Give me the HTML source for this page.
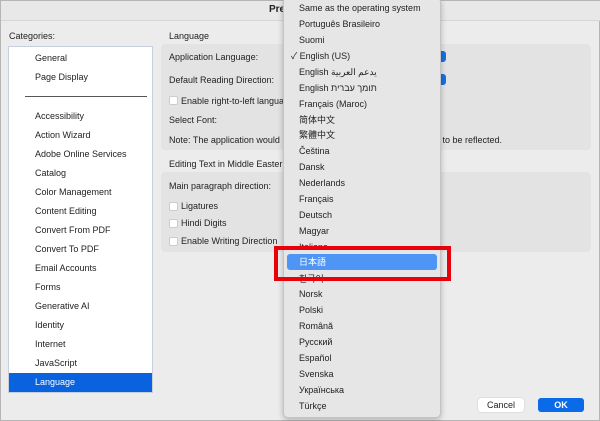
<!DOCTYPE html><html><head><style>
*{margin:0;padding:0;box-sizing:border-box}
body{width:600px;height:421px;overflow:hidden;background:#ececec;font-family:"Liberation Sans","Noto Sans CJK JP",sans-serif;font-size:9px;line-height:11px;color:#222;position:relative;border:1px solid #b5b5b5}
.a{position:absolute;white-space:nowrap}
.cb{position:absolute;width:9px;height:9px;background:#fff;border:1px solid #ccc;border-radius:2px}
.li{position:absolute;left:34px;font-size:9px}
.mi{position:absolute;left:298px;font-size:9px;line-height:11px;height:11px;overflow:visible;color:#222}
</style></head><body>
<div class="a" style="left:0;top:0;width:600px;height:20px;background:#e8e8e8;border-bottom:1px solid #d6d6d6"></div>
<div class="a" style="left:268px;top:3px;font-weight:bold;font-size:10px">Preferences</div>
<div class="a" style="left:8px;top:30px">Categories:</div>
<div class="a" style="left:7px;top:45px;width:145px;height:347px;background:#fff;border:1px solid #c8cfdc"></div>
<div class="li" style="top:52px">General</div>
<div class="li" style="top:71px">Page Display</div>
<div class="a" style="left:24px;top:95px;width:122px;height:1px;background:#555"></div>
<div class="li" style="top:110px">Accessibility</div>
<div class="li" style="top:129px">Action Wizard</div>
<div class="li" style="top:148px">Adobe Online Services</div>
<div class="li" style="top:167px">Catalog</div>
<div class="li" style="top:186px">Color Management</div>
<div class="li" style="top:205px">Content Editing</div>
<div class="li" style="top:224px">Convert From PDF</div>
<div class="li" style="top:243px">Convert To PDF</div>
<div class="li" style="top:262px">Email Accounts</div>
<div class="li" style="top:281px">Forms</div>
<div class="li" style="top:300px">Generative AI</div>
<div class="li" style="top:319px">Identity</div>
<div class="li" style="top:338px">Internet</div>
<div class="li" style="top:357px">JavaScript</div>
<div class="a" style="left:8px;top:372px;width:143px;height:19px;background:#0a63de"></div>
<div class="li" style="top:376px;color:#fff">Language</div>

<div class="a" style="left:168px;top:30px">Language</div>
<div class="a" style="left:160px;top:43px;width:430px;height:106px;background:#e3e3e3;border-radius:4px"></div>
<div class="a" style="left:168px;top:51px">Application Language:</div>
<div class="a" style="left:168px;top:74px">Default Reading Direction:</div>
<div class="cb" style="left:168px;top:95px"></div>
<div class="a" style="left:180px;top:95px">Enable right-to-left language options</div>
<div class="a" style="left:168px;top:114px">Select Font:</div>
<div class="a" style="left:168px;top:134px">Note: The application would need to restart for the language change to be reflected.</div>
<div class="a" style="left:437px;top:50px;width:8px;height:11px;background:#1a6fe0;border-radius:3px"></div>
<div class="a" style="left:437px;top:73px;width:8px;height:11px;background:#1a6fe0;border-radius:3px"></div>
<div class="a" style="left:168px;top:158px">Editing Text in Middle Eastern Languages</div>
<div class="a" style="left:160px;top:171px;width:430px;height:80px;background:#e3e3e3;border-radius:4px"></div>
<div class="a" style="left:168px;top:180px">Main paragraph direction:</div>
<div class="cb" style="left:168px;top:201px"></div><div class="a" style="left:180px;top:200px">Ligatures</div>
<div class="cb" style="left:168px;top:218px"></div><div class="a" style="left:180px;top:217px">Hindi Digits</div>
<div class="cb" style="left:168px;top:236px"></div><div class="a" style="left:180px;top:235px">Enable Writing Direction</div>

<div class="a" style="left:477px;top:397px;width:46px;height:14px;background:#fff;border-radius:3px;box-shadow:0 0 1px #999;text-align:center;line-height:14px">Cancel</div>
<div class="a" style="left:537px;top:397px;width:46px;height:14px;background:#0a6ae8;border-radius:3px;color:#fff;font-weight:bold;text-align:center;line-height:14px">OK</div>

<div class="a" style="left:282px;top:-4px;width:158px;height:421px;background:#e6e6e6;border:1px solid #c4c4c4;border-radius:5px;box-shadow:0 2px 6px rgba(0,0,0,.25)"></div>
<div class="mi" style="top:2px">Same as the operating system</div>
<div class="mi" style="top:18px">Português Brasileiro</div>
<div class="mi" style="top:34px">Suomi</div>
<div class="mi" style="top:50px;left:290px">✓ English (US)</div>
<div class="mi" style="top:66px">English يدعم العربية</div>
<div class="mi" style="top:82px">English תומך עברית</div>
<div class="mi" style="top:98px">Français (Maroc)</div>
<div class="mi" style="top:114px">简体中文</div>
<div class="mi" style="top:129px">繁體中文</div>
<div class="mi" style="top:145px">Čeština</div>
<div class="mi" style="top:161px">Dansk</div>
<div class="mi" style="top:177px">Nederlands</div>
<div class="mi" style="top:193px">Français</div>
<div class="mi" style="top:209px">Deutsch</div>
<div class="mi" style="top:225px">Magyar</div>
<div class="mi" style="top:241px">Italiano</div>
<div class="mi" style="top:273px">한국어</div>
<div class="mi" style="top:288px">Norsk</div>
<div class="mi" style="top:304px">Polski</div>
<div class="mi" style="top:320px">Română</div>
<div class="mi" style="top:336px">Русский</div>
<div class="mi" style="top:352px">Español</div>
<div class="mi" style="top:368px">Svenska</div>
<div class="mi" style="top:384px">Українська</div>
<div class="mi" style="top:400px">Türkçe</div>
<div class="a" style="left:273px;top:245px;width:177px;height:35px;border:4px solid #e8000b"></div>
<div class="a" style="left:286px;top:253px;width:150px;height:16px;background:#4f95f5;border-radius:3px"></div>
<div class="mi" style="top:256px;color:#fff">日本語</div>
</body></html>
